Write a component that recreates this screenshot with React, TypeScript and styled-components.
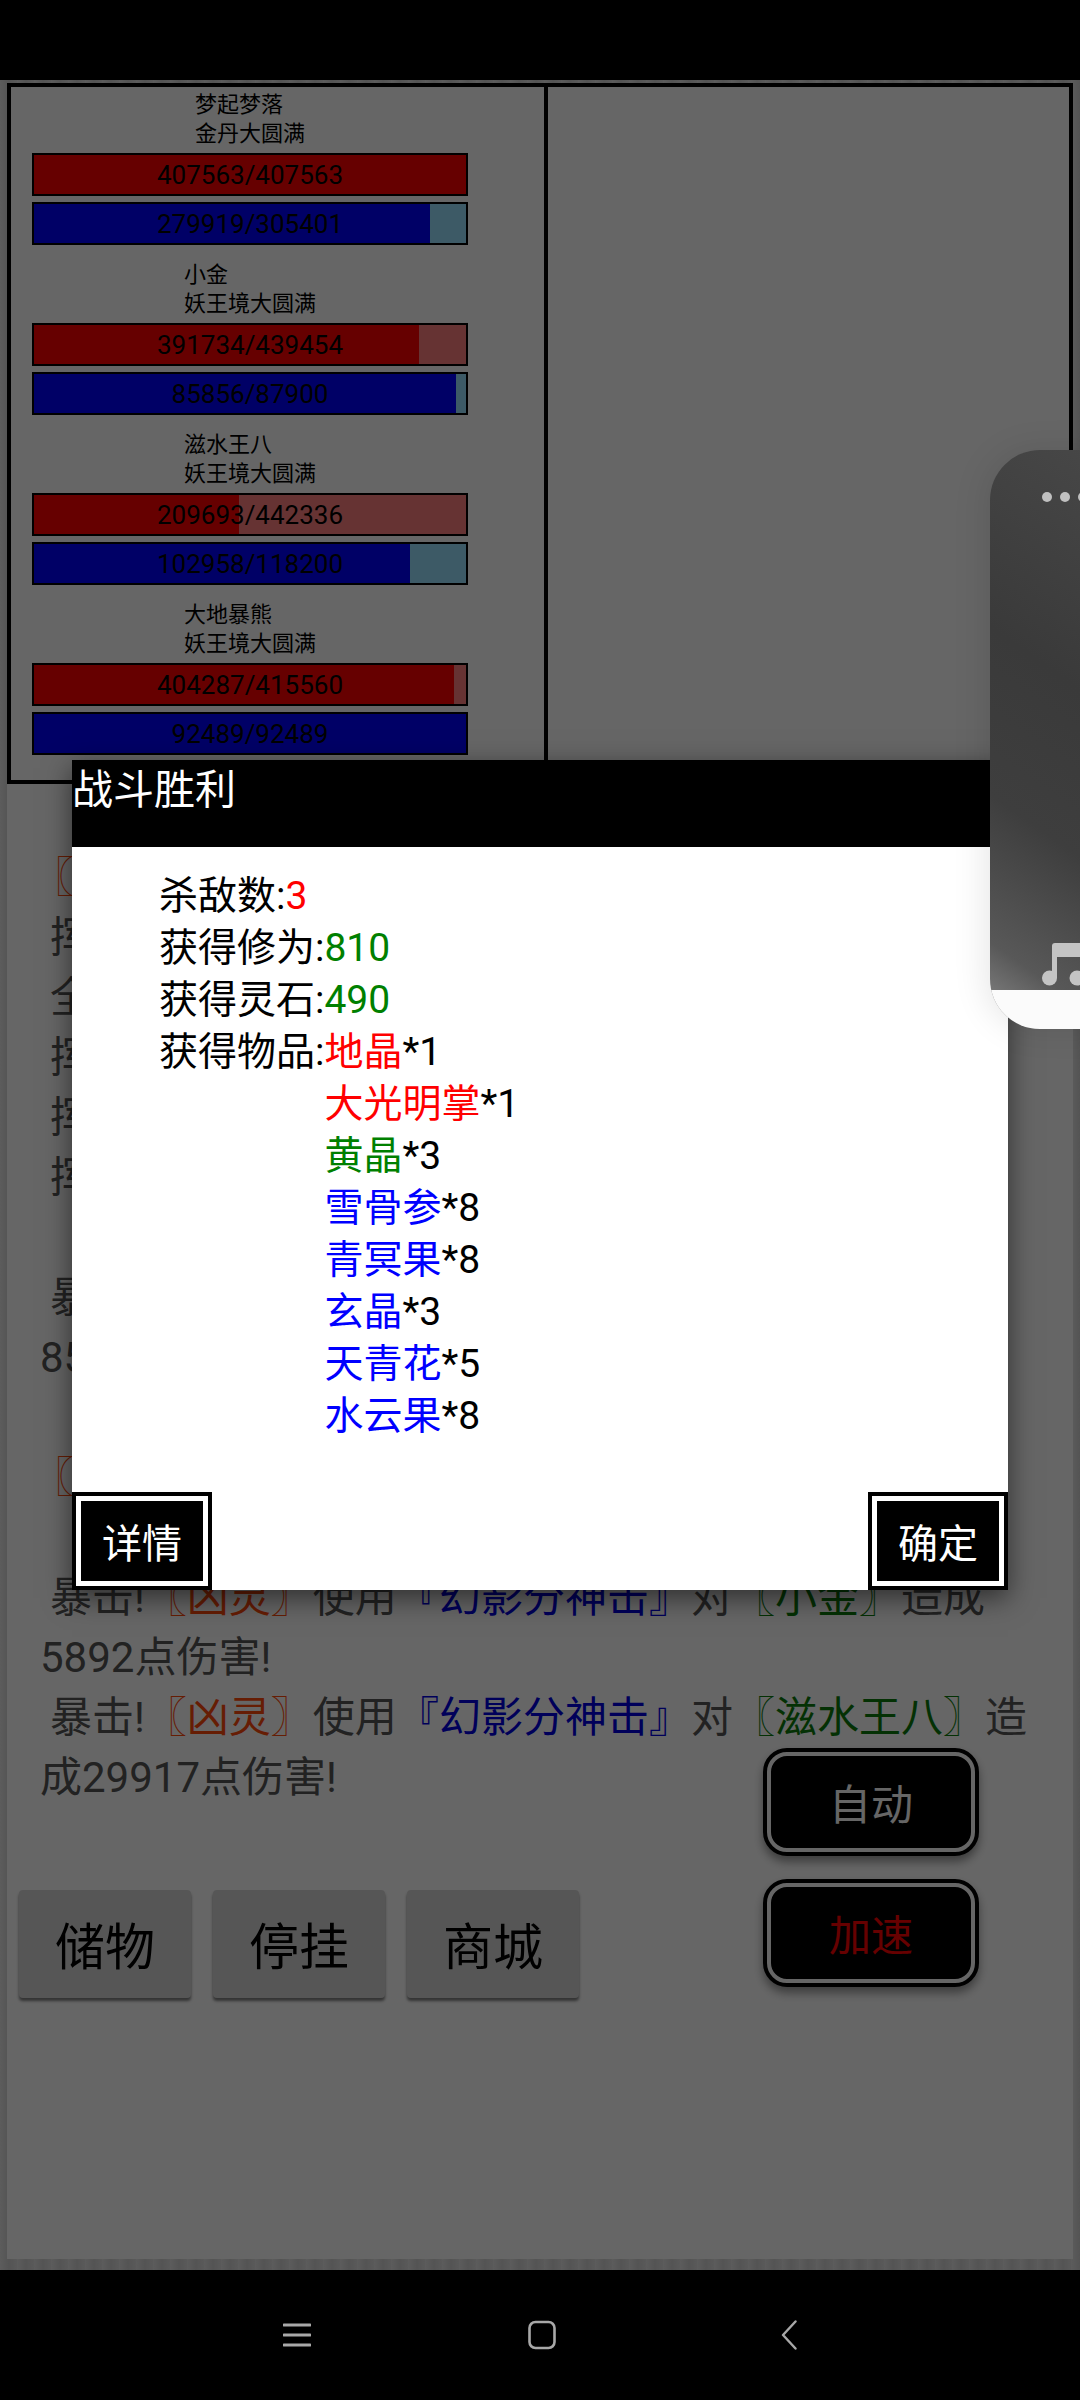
import React from "react";
import styled, { createGlobalStyle } from "styled-components";

const team = [
  { name: "梦起梦落", rank: "金丹大圆满", hp: [407563, 407563], mp: [279919, 305401] },
  { name: "小金", rank: "妖王境大圆满", hp: [391734, 439454], mp: [85856, 87900] },
  { name: "滋水王八", rank: "妖王境大圆满", hp: [209693, 442336], mp: [102958, 118200] },
  { name: "大地暴熊", rank: "妖王境大圆满", hp: [404287, 415560], mp: [92489, 92489] },
];

const loot: [string, string, string][] = [
  ["地晶", "*1", "red"],
  ["大光明掌", "*1", "red"],
  ["黄晶", "*3", "green"],
  ["雪骨参", "*8", "blue"],
  ["青冥果", "*8", "blue"],
  ["玄晶", "*3", "blue"],
  ["天青花", "*5", "blue"],
  ["水云果", "*8", "blue"],
];

function Bar({ kind, value }: { kind: "hp" | "mp"; value: number[] }) {
  return (
    <BarWrap $kind={kind}>
      <BarFill $kind={kind} style={{ width: (value[0] / value[1]) * 100 + "%" }} />
      <BarText>
        {value[0]}/{value[1]}
      </BarText>
    </BarWrap>
  );
}

function Hit({ target, skill, rest }: { target: string; skill: string; rest: string }) {
  return (
    <LogLine $indent={10}>
      暴击!<Tag $color="#ff4a0a">〖凶灵〗</Tag>使用<Tag $color="#0000e0">『{skill}』</Tag>对
      <Tag $color="#0a7a0a">〖{target}〗</Tag>
      {rest}
    </LogLine>
  );
}

function App() {
  return (
    <>
      <Global />
      <Screen>
        <StatusBar />
        <Game>
          <Inner>
            <Battle>
              <Side>
                {team.map((m) => (
                  <Member key={m.name}>
                    <Names>
                      <div>{m.name}</div>
                      <div>{m.rank}</div>
                    </Names>
                    <Bar kind="hp" value={m.hp} />
                    <Bar kind="mp" value={m.mp} />
                  </Member>
                ))}
              </Side>
              <Side />
            </Battle>
            <Log>
              <LogLine $indent={-8}>
                <Tag $color="#ff4a0a">〖凶灵〗</Tag>受到攻击
              </LogLine>
              <LogLine $indent={10}>挥出一击</LogLine>
              <LogLine $indent={10}>全力一击</LogLine>
              <LogLine $indent={10}>挥出一击</LogLine>
              <LogLine $indent={10}>挥出一击</LogLine>
              <LogLine $indent={10}>挥出一击</LogLine>
              <LogLine>&nbsp;</LogLine>
              <LogLine $indent={10}>暴击</LogLine>
              <LogLine>85点伤害!</LogLine>
              <LogLine>&nbsp;</LogLine>
              <LogLine $indent={-8}>
                <Tag $color="#ff4a0a">〖凶灵〗</Tag>
              </LogLine>
              <LogLine>&nbsp;</LogLine>
              <Hit target="小金" skill="幻影分神击" rest="造成5892点伤害!" />
              <Hit target="滋水王八" skill="幻影分神击" rest="造成29917点伤害!" />
              <LogLine>&nbsp;</LogLine>
              <LogLine $indent={-8}>
                <Tag $color="#0a7a0a">〖小金〗</Tag>使用
              </LogLine>
            </Log>
            <Actions>
              <ActionButton>储物</ActionButton>
              <ActionButton>停挂</ActionButton>
              <ActionButton>商城</ActionButton>
            </Actions>
            <AutoButton $top={1748}>自动</AutoButton>
            <AutoButton $top={1879} $red>
              加速
            </AutoButton>
          </Inner>
        </Game>
        <NavBar>
          <svg width="28" height="24" viewBox="0 0 28 24">
            <path d="M1 2h26M1 12h26M1 22h26" stroke="#a8a8a8" strokeWidth="3" strokeLinecap="round" />
          </svg>
          <svg width="28" height="30" viewBox="0 0 28 30">
            <rect x="1.5" y="2" width="25" height="26" rx="6" fill="none" stroke="#a8a8a8" strokeWidth="2.6" />
          </svg>
          <svg width="16" height="30" viewBox="0 0 16 30">
            <path d="M14.5 1.5 2 15l12.5 13.5" fill="none" stroke="#a8a8a8" strokeWidth="2.4" strokeLinecap="round" strokeLinejoin="round" />
          </svg>
        </NavBar>
        <Scrim />
        <Dialog>
          <DialogHead>战斗胜利</DialogHead>
          <DialogBody>
            <Row>
              杀敌数:<Val $color="red">3</Val>
            </Row>
            <Row>
              获得修为:<Val $color="green">810</Val>
            </Row>
            <Row>
              获得灵石:<Val $color="green">490</Val>
            </Row>
            <LootRow>
              <div>获得物品:</div>
              <div>
                {loot.map(([n, c, col]) => (
                  <Row key={n}>
                    <Val $color={col}>{n}</Val>
                    {c}
                  </Row>
                ))}
              </div>
            </LootRow>
          </DialogBody>
          <DialogFoot>
            <DialogButton>详情</DialogButton>
            <DialogButton>确定</DialogButton>
          </DialogFoot>
        </Dialog>
        <MusicWidget>
          <Dots>
            <i />
            <i />
            <i />
          </Dots>
          <NoteIcon viewBox="0 0 50 46" width="50" height="46">
            <path d="M13 0h32v35h-5V14H15v21h-5V3a3 3 0 0 1 3-3z" fill="#c4c4c4" />
            <circle cx="7.5" cy="35" r="7.5" fill="#c4c4c4" />
            <circle cx="35" cy="35" r="7.5" fill="#c4c4c4" />
          </NoteIcon>
          <WidgetFoot />
        </MusicWidget>
      </Screen>
    </>
  );
}

const Global = createGlobalStyle`
  html, body {
    margin: 0;
    padding: 0;
    background: #000;
  }
  * {
    box-sizing: border-box;
  }
  body {
    font-family: Roboto, "Noto Sans CJK SC", sans-serif;
  }
`;

const Screen = styled.div`
  position: relative;
  width: 1080px;
  height: 2400px;
  overflow: hidden;
  display: flex;
  flex-direction: column;
`;
const StatusBar = styled.div`
  height: 80px;
  background: #000;
`;
const Game = styled.div`
  height: 2190px;
  padding: 3px 7px 11px 7px;
  background: repeating-linear-gradient(90deg, #e6e6e6 0, #d2d2d2 9px, #e0e0e0 17px);
`;
const Inner = styled.div`
  height: 100%;
  background: #fff;
  display: flex;
  flex-direction: column;
`;
const Battle = styled.div`
  height: 701px;
  display: flex;
  border: 4px solid #000;
`;
const Side = styled.div`
  flex: 1;
  padding: 3px 0 0 21px;
  & + & {
    border-left: 4px solid #000;
  }
  &:first-child {
    flex: 0 0 533px;
  }
`;
const Member = styled.div`
  width: 436px;
  height: 170px;
`;
const Names = styled.div`
  width: fit-content;
  margin: 0 auto 5px;
  font-size: 22px;
  line-height: 29px;
  color: #000;
`;
const BarWrap = styled.div<{ $kind: string }>`
  position: relative;
  height: 43px;
  margin-bottom: 6px;
  border: 2px solid #000;
  background: ${(p) => (p.$kind === "hp" ? "#ff8080" : "#98e0ff")};
`;
const BarFill = styled.div<{ $kind: string }>`
  height: 100%;
  background: ${(p) => (p.$kind === "hp" ? "#ff0000" : "#0000ff")};
`;
const BarText = styled.div`
  position: absolute;
  inset: 0;
  display: flex;
  align-items: center;
  justify-content: center;
  font-size: 26px;
  color: #000;
`;
const Log = styled.div`
  height: 1091px;
  overflow: hidden;
  padding: 64px 0 0 33px;
  font-size: 42px;
  line-height: 60px;
  color: #555;
`;
const LogLine = styled.div<{ $indent?: number }>`
  width: 1000px;
  text-indent: ${(p) => p.$indent || 0}px;
`;
const Tag = styled.span<{ $color: string }>`
  color: ${(p) => p.$color};
`;
const Actions = styled.div`
  display: flex;
  gap: 22px;
  padding: 15px 0 0 12px;
`;
const ActionButton = styled.div`
  width: 172px;
  height: 108px;
  display: flex;
  align-items: center;
  justify-content: center;
  padding-bottom: 2px;
  border-radius: 4px;
  background: #d8d8d8;
  color: #000;
  font-size: 50px;
  box-shadow: 0 3px 3px rgba(0, 0, 0, 0.5);
`;
const AutoButton = styled.div<{ $top: number; $red?: boolean }>`
  position: absolute;
  left: 763px;
  top: ${(p) => p.$top}px;
  width: 216px;
  height: 108px;
  padding-bottom: 2px;
  display: flex;
  align-items: center;
  justify-content: center;
  background: #000;
  border: 4px solid #000;
  border-radius: 24px;
  outline: 4px solid #fff;
  outline-offset: -8px;
  color: ${(p) => (p.$red ? "#ff0000" : "#fff")};
  font-size: 42px;
  box-shadow: 0 6px 10px rgba(0, 0, 0, 0.4);
`;
const NavBar = styled.div`
  height: 130px;
  background: #000;
  display: flex;
  align-items: center;
  justify-content: center;
  gap: 0;
  & > svg {
    flex: none;
  }
  & > svg:nth-child(2) {
    margin: 0 225px 0 217px;
  }
`;
const Scrim = styled.div`
  position: absolute;
  inset: 80px 0 130px 0;
  background: rgba(0, 0, 0, 0.6);
`;
const Dialog = styled.div`
  position: absolute;
  left: 72px;
  top: 760px;
  width: 936px;
  height: 830px;
  background: #fff;
  display: flex;
  flex-direction: column;
  box-shadow: 0 8px 26px rgba(0, 0, 0, 0.55);
`;
const DialogHead = styled.div`
  height: 87px;
  background: #000;
  color: #fff;
  font-size: 41px;
  line-height: 60px;
`;
const DialogBody = styled.div`
  flex: 1;
  padding: 23px 0 0 87px;
  font-size: 39px;
  line-height: 52px;
  color: #000;
`;
const Row = styled.div``;
const LootRow = styled.div`
  display: flex;
`;
const Val = styled.span<{ $color: string }>`
  color: ${(p) => (p.$color === "green" ? "#008000" : p.$color === "red" ? "#ff0000" : "#0000ff")};
`;
const DialogFoot = styled.div`
  display: flex;
  justify-content: space-between;
`;
const DialogButton = styled.div`
  width: 140px;
  height: 98px;
  display: flex;
  align-items: center;
  justify-content: center;
  background: #000;
  border: 4px solid #000;
  outline: 5px solid #fff;
  outline-offset: -9px;
  color: #fff;
  font-size: 40px;
`;
const MusicWidget = styled.div`
  position: absolute;
  left: 990px;
  top: 450px;
  width: 130px;
  height: 579px;
  border-radius: 50px 0 0 50px;
  overflow: hidden;
  background: linear-gradient(35deg, #8e8e8e 0%, #585858 13%, #3e3e3e 35%, #3a3a3a 60%, #484848 100%);
  box-shadow: -4px 0 34px rgba(0, 0, 0, 0.1);
`;
const Dots = styled.div`
  position: absolute;
  left: 52px;
  top: 42px;
  display: flex;
  gap: 8px;
  & > i {
    width: 10px;
    height: 10px;
    border-radius: 50%;
    background: #c0c0c0;
  }
`;
const NoteIcon = styled.svg`
  position: absolute;
  left: 52px;
  top: 493px;
`;
const WidgetFoot = styled.div`
  position: absolute;
  left: 0;
  right: 0;
  bottom: 0;
  height: 39px;
  background: #fbfbfb;
`;

export default App;
